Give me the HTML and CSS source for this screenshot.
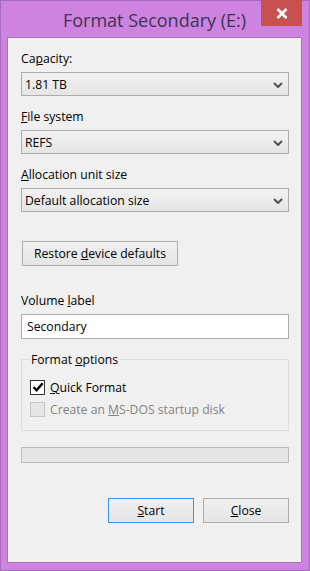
FILE: index.html
```html
<!DOCTYPE html>
<html lang="en">
<head>
    <meta charset="UTF-8">
    <meta name="viewport" content="width=device-width, initial-scale=1.0">
    <title>Format Secondary (E:)</title>
    <link rel="stylesheet" href="styles.css">
</head>
<body>
    <div class="window">
        <!-- Title bar -->
        <div class="titlebar">
            <span></span>
            <div class="title">Format Secondary (E:)</div>
            <button class="close-btn" type="button">
                <svg width="12" height="11" viewBox="0 0 12 11">
                    <path d="M1.5 1 L10.5 10 M10.5 1 L1.5 10" stroke="#fff" stroke-width="2.6" fill="none"/>
                </svg>
            </button>
        </div>

        <!-- Dialog body -->
        <div class="client">
            <div class="field">
                <label class="field-label">Ca<u>p</u>acity:</label>
                <div class="combo">
                    <span>1.81 TB</span>
                    <svg class="chevron" width="10" height="6" viewBox="0 0 10 6"><path d="M1 1 L5 5 L9 1" stroke="#505050" stroke-width="2" fill="none"/></svg>
                </div>
            </div>

            <div class="field">
                <label class="field-label"><u>F</u>ile system</label>
                <div class="combo">
                    <span>REFS</span>
                    <svg class="chevron" width="10" height="6" viewBox="0 0 10 6"><path d="M1 1 L5 5 L9 1" stroke="#505050" stroke-width="2" fill="none"/></svg>
                </div>
            </div>

            <div class="field">
                <label class="field-label"><u>A</u>llocation unit size</label>
                <div class="combo">
                    <span>Default allocation size</span>
                    <svg class="chevron" width="10" height="6" viewBox="0 0 10 6"><path d="M1 1 L5 5 L9 1" stroke="#505050" stroke-width="2" fill="none"/></svg>
                </div>
            </div>

            <button class="btn restore" type="button">Restore <u>d</u>evice defaults</button>

            <div class="field volume">
                <label class="field-label">Volume <u>l</u>abel</label>
                <div class="textbox">Secondary</div>
            </div>

            <fieldset class="options">
                <legend>Format <u>o</u>ptions</legend>
                <div class="check-row">
                    <span class="checkbox">
                        <svg width="12" height="12" viewBox="0 0 12 12"><path d="M1.5 6.2 L4.6 9.3 L10.6 2.2" stroke="#000" stroke-width="2.4" fill="none"/></svg>
                    </span>
                    <span><u>Q</u>uick Format</span>
                </div>
                <div class="check-row disabled">
                    <span class="checkbox"></span>
                    <span>Create an <u>M</u>S-DOS startup disk</span>
                </div>
            </fieldset>

            <div class="progress"></div>

            <div class="actions">
                <button class="btn default" type="button"><u>S</u>tart</button>
                <button class="btn" type="button"><u>C</u>lose</button>
            </div>
        </div>
    </div>
</body>
</html>
```

FILE: styles.css
```css
/* Page */
body {
    margin: 0;
    padding: 0;
    font-family: "Segoe UI", "Open Sans", "Noto Sans", sans-serif;
    font-size: 12.2px;
    color: #000;
}

/* Window frame */
.window {
    width: 310px;
    height: 571px;
    box-sizing: border-box;
    border: 1px solid #a76bbb;
    background-color: #cf83e0;
    padding: 0 7px 7px 6px;
    display: flex;
    flex-direction: column;
}

.titlebar {
    height: 36px;
    display: grid;
    grid-template-columns: 1fr auto 1fr;
    align-items: start;
}

.title {
    font-size: 18px;
    line-height: 24px;
    padding-top: 7px;
    color: #3a3450;
    white-space: nowrap;
}

.close-btn {
    justify-self: end;
    width: 41px;
    height: 26px;
    margin-top: -1px;
    border: none;
    padding: 0;
    background-color: #c75050;
    display: flex;
    align-items: center;
    justify-content: center;
}

/* Client area */
.client {
    flex: 1;
    background-color: #f0f0f0;
    border: 1px solid #a673b8;
    padding: 13px 12px 0 13px;
    display: flex;
    flex-direction: column;
}

.field {
    display: flex;
    flex-direction: column;
    gap: 6px;
}

.field + .field {
    margin-top: 13px;
}

.field-label {
    line-height: 15px;
}

u {
    text-decoration-thickness: 1px;
    text-underline-offset: 1px;
}

/* Combo boxes */
.combo {
    height: 24px;
    box-sizing: border-box;
    border: 1px solid #acacac;
    background: linear-gradient(#f2f2f2, #e5e5e5);
    padding: 0 5px 0 3px;
    display: flex;
    align-items: center;
    justify-content: space-between;
}

.chevron {
    margin-top: 1px;
}

/* Push buttons */
.btn {
    font-family: inherit;
    font-size: inherit;
    color: #000;
    height: 25px;
    box-sizing: border-box;
    border: 1px solid #acacac;
    background: linear-gradient(#f0f0f0, #e5e5e5);
    padding: 0;
}

.restore {
    align-self: flex-start;
    width: 156px;
    margin-top: 29px;
    margin-left: 1px;
}

.volume {
    margin-top: 27px;
}

.textbox {
    height: 25px;
    box-sizing: border-box;
    border: 1px solid #abadb3;
    background-color: #fff;
    padding: 0 5px;
    display: flex;
    align-items: center;
}

/* Format options group */
.options {
    margin: 13px 0 0 0;
    border: 1px solid #dcdcdc;
    padding: 12px 8px 13px 8px;
    display: flex;
    flex-direction: column;
    gap: 6px;
}

.options legend {
    padding: 0 1px;
    line-height: 15px;
}

.check-row {
    height: 16px;
    display: flex;
    align-items: center;
    gap: 5px;
}

.checkbox {
    width: 15px;
    height: 15px;
    box-sizing: border-box;
    border: 1px solid #333;
    background-color: #fff;
    display: flex;
    align-items: center;
    justify-content: center;
}

.check-row.disabled {
    color: #838383;
}

.check-row.disabled .checkbox {
    border-color: #c5c5c5;
    background-color: #e6e6e6;
}

/* Progress bar */
.progress {
    margin-top: 16px;
    height: 16px;
    box-sizing: border-box;
    border: 1px solid #bcbcbc;
    background-color: #e6e6e6;
}

/* Bottom buttons */
.actions {
    margin-top: 35px;
    display: flex;
    justify-content: flex-end;
    gap: 9px;
}

.actions .btn {
    width: 86px;
}

.btn.default {
    border-color: #3c94e8;
}
```
